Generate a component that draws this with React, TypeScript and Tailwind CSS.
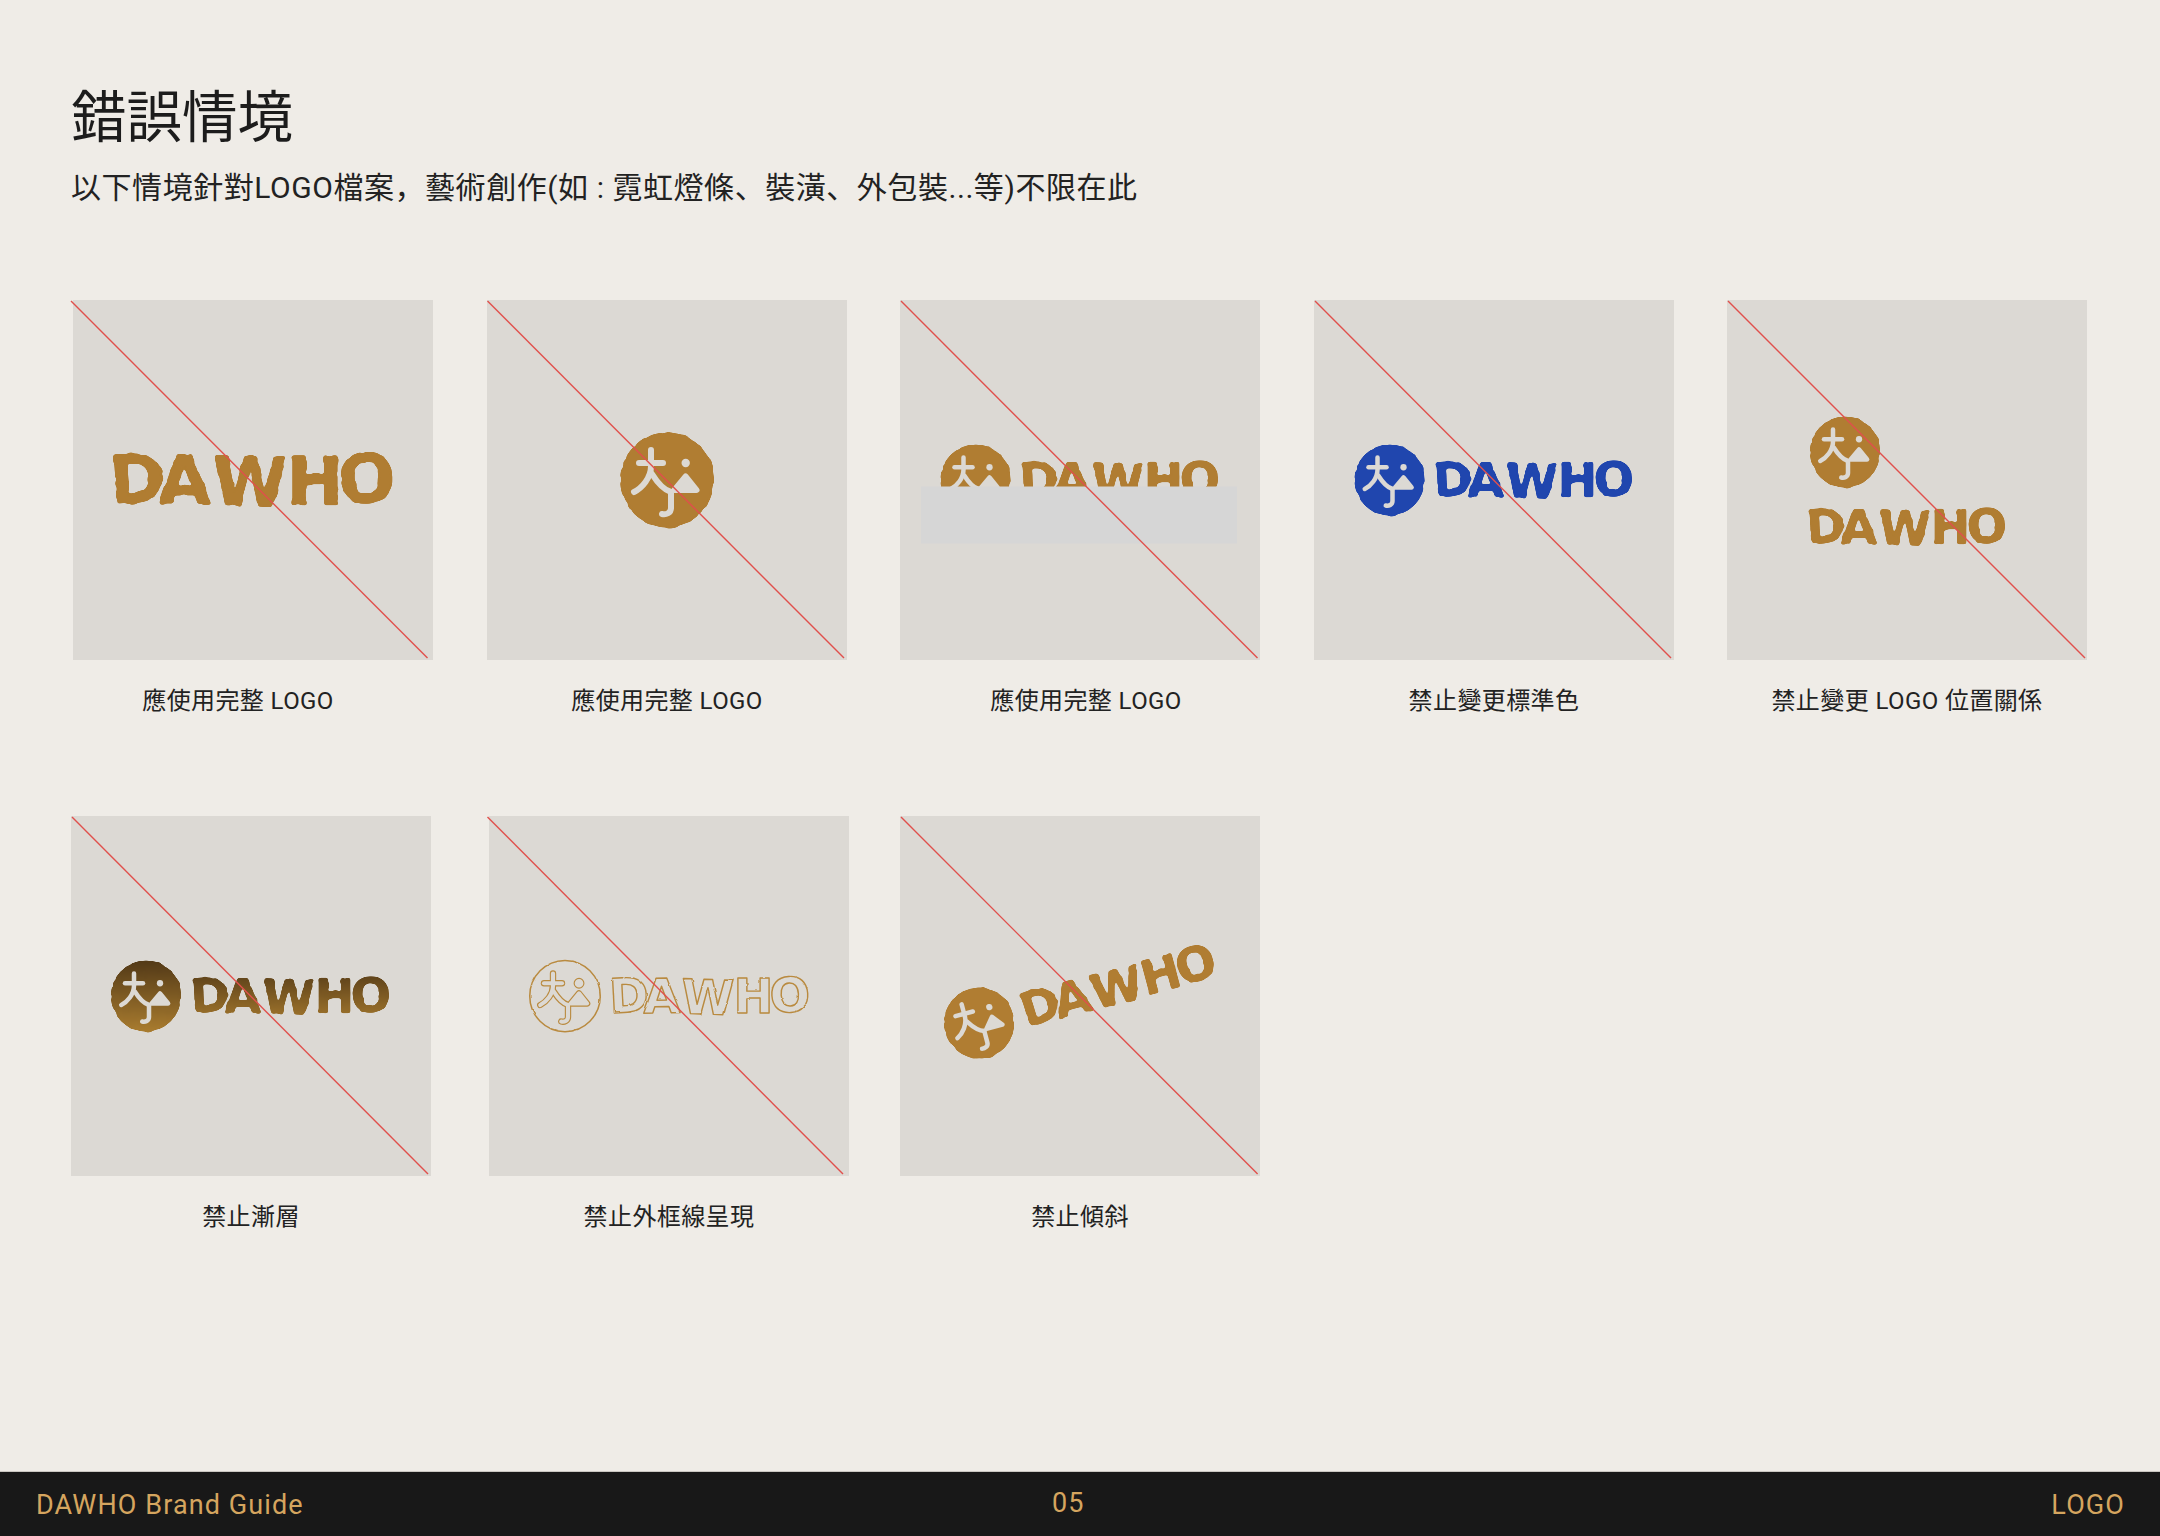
type Tone = 'gold' | 'blue' | 'fade' | 'line';

type Slot = { x: number; y: number };

type CardInfo = {
  caption: string;
  captionClass?: string;
  cardClass?: string;
  lineFrom: number;
  lineTo: number;
  tone?: Tone;
  mark?: Slot;
  markSize?: number;
  word?: Slot;
  wordWidth?: number;
  tilt?: boolean;
  cover?: boolean;
};

const FILL: Record<Tone, string> = {
  gold: '#b07d32',
  blue: '#2046ae',
  fade: 'url(#fade)',
  line: 'none',
};

const PANEL = '#dcd9d4';
const LINE_GOLD = '#b98a3f';

const ROW_ONE: CardInfo[] = [
  { caption: '應使用完整 LOGO', captionClass: 'pr-[30px]', lineFrom: -2, lineTo: 354.5, word: { x: 40.5, y: 154.5 }, wordWidth: 279 },
  { caption: '應使用完整 LOGO', cardClass: 'ml-[54px]', lineFrom: 0.5, lineTo: 357, mark: { x: 132, y: 132 }, markSize: 96 },
  { caption: '應使用完整 LOGO', captionClass: 'pl-[12px]', cardClass: 'ml-[53px]', lineFrom: 1, lineTo: 357.5, mark: { x: 39.5, y: 144 }, word: { x: 122, y: 162 }, cover: true },
  { caption: '禁止變更標準色', cardClass: 'ml-[54px]', lineFrom: 1, lineTo: 357, tone: 'blue', mark: { x: 39.5, y: 144 }, word: { x: 122, y: 162 } },
  { caption: '禁止變更 LOGO 位置關係', cardClass: 'ml-[53px]', lineFrom: 1, lineTo: 358, mark: { x: 82, y: 116 }, word: { x: 82, y: 209 } },
];

const ROW_TWO: CardInfo[] = [
  { caption: '禁止漸層', lineFrom: 1, lineTo: 357, tone: 'fade', mark: { x: 39, y: 144 }, word: { x: 122, y: 162 } },
  { caption: '禁止外框線呈現', cardClass: 'ml-[58px]', lineFrom: -1.5, lineTo: 354, tone: 'line', mark: { x: 40, y: 144 }, word: { x: 123, y: 162 } },
  { caption: '禁止傾斜', cardClass: 'ml-[51px]', lineFrom: 1, lineTo: 357.6, mark: { x: 39.5, y: 144 }, word: { x: 122, y: 162 }, tilt: true },
];

function Emblem({ at, size, tone }: { at: Slot; size: number; tone: Tone }) {
  const outline = tone === 'line';
  const strokes = (
    <>
      <path d="M20 31H44" />
      <path d="M32 18V34C32 46 23 56 15 60" />
      <path d="M33 42C38 50 45 58 52 60" />
      <path d="M52 60V76C52 81 47 83 43 82" />
      <path d="M66.7 44.5L77.5 58H55.5Z" fill={PANEL} />
    </>
  );

  return (
    <g transform={`translate(${at.x} ${at.y}) scale(${size / 96})`}>
      <g filter={outline ? 'url(#rough-thin)' : 'url(#rough)'}>
        <ellipse cx="48" cy="48" rx="47" ry="47.5" fill={FILL[tone]} stroke={outline ? LINE_GOLD : 'none'} strokeWidth={outline ? 2 : 0} />
      </g>
      {outline ? (
        <>
          <g fill="none" stroke={LINE_GOLD} strokeWidth="8.5" strokeLinecap="round" strokeLinejoin="round">
            {strokes}
            <circle cx="66.7" cy="31" r="3" />
          </g>
          <g fill="none" stroke={PANEL} strokeWidth="5.5" strokeLinecap="round" strokeLinejoin="round">
            {strokes}
            <circle cx="66.7" cy="31" r="3" fill={PANEL} />
          </g>
        </>
      ) : (
        <g fill="none" stroke={PANEL} strokeWidth="6" strokeLinecap="round" strokeLinejoin="round">
          {strokes}
          <circle cx="66.7" cy="31" r="4.2" fill={PANEL} stroke="none" />
        </g>
      )}
    </g>
  );
}

function Word({ at, width, tone }: { at: Slot; width: number; tone: Tone }) {
  const outline = tone === 'line';
  const k = width / 279;
  return (
    <g transform={`translate(${at.x} ${at.y}) scale(${k})`}>
      <g filter={outline ? 'url(#rough-thin)' : 'url(#rough)'}>
        <text
          x="-3 45 98 173 226"
          y="50"
          rotate="-3 -1 2 0 -4"
          fontSize="68"
          className="font-['DejaVu_Sans',sans-serif] font-bold"
          fill={FILL[tone]}
          stroke={outline ? LINE_GOLD : FILL[tone]}
          strokeWidth={outline ? 2 : 0.6}
          strokeLinejoin="round"
        >
          DAWHO
        </text>
      </g>
    </g>
  );
}

function Card({ info }: { info: CardInfo }) {
  const tone = info.tone ?? 'gold';
  return (
    <div className={`w-[360px] shrink-0 ${info.cardClass ?? ''}`}>
      <div className="h-[360px] w-[360px] bg-[#dcd9d4]">
        <svg viewBox="0 0 360 360" className="h-[360px] w-[360px] overflow-visible">
          <g transform={info.tilt ? 'rotate(-15 180 180)' : undefined}>
            {info.mark && <Emblem at={info.mark} size={info.markSize ?? 72} tone={tone} />}
            {info.word && <Word at={info.word} width={info.wordWidth ?? 196} tone={tone} />}
          </g>
          {info.cover && <rect x="21" y="186.5" width="316" height="57" fill="#d6d6d6" />}
          <line x1={info.lineFrom} y1="1" x2={info.lineTo} y2="358" stroke="#e0504c" strokeWidth="1.4" />
        </svg>
      </div>
      <p className={`mt-[25px] text-center text-[24px] leading-8 tracking-[0.4px] text-[#222222] ${info.captionClass ?? ''}`}>{info.caption}</p>
    </div>
  );
}

export default function App() {
  return (
    <div className="flex h-[1536px] w-[2160px] flex-col overflow-hidden bg-[#efece7] font-['Roboto','Noto_Sans_CJK_JP',sans-serif]">
      <svg className="absolute h-0 w-0">
        <defs>
          <filter id="rough" x="-10%" y="-15%" width="120%" height="130%" colorInterpolationFilters="sRGB">
            <feTurbulence type="fractalNoise" baseFrequency="0.09" numOctaves="2" seed="4" result="noise" />
            <feDisplacementMap in="SourceGraphic" in2="noise" scale="4" xChannelSelector="R" yChannelSelector="G" result="moved" />
            <feGaussianBlur in="moved" stdDeviation="1.3" result="soft" />
            <feComponentTransfer in="soft">
              <feFuncA type="linear" slope="5" intercept="-2" />
            </feComponentTransfer>
          </filter>
          <filter id="rough-thin" x="-10%" y="-15%" width="120%" height="130%" colorInterpolationFilters="sRGB">
            <feTurbulence type="fractalNoise" baseFrequency="0.09" numOctaves="2" seed="4" result="noise" />
            <feDisplacementMap in="SourceGraphic" in2="noise" scale="3" xChannelSelector="R" yChannelSelector="G" />
          </filter>
          <linearGradient id="fade" x1="0" y1="0" x2="0" y2="1">
            <stop offset="0" stopColor="#523917" />
            <stop offset="1" stopColor="#a97c2f" />
          </linearGradient>
        </defs>
      </svg>

      <main className="flex-1">
        <h1 className="ml-[71px] mt-[84px] text-[55.5px] leading-[70px] text-[#1c1c1c]">錯誤情境</h1>
        <p className="ml-[71px] mt-[14px] text-[30px] leading-10 tracking-[0.55px] text-[#222222]">以下情境針對LOGO檔案，藝術創作(如 : 霓虹燈條、裝潢、外包裝...等)不限在此</p>

        <section className="ml-[73px] mt-[92px] flex">
          {ROW_ONE.map((info, i) => (
            <Card key={i} info={info} />
          ))}
        </section>
        <section className="ml-[71px] mt-[99px] flex">
          {ROW_TWO.map((info, i) => (
            <Card key={i} info={info} />
          ))}
        </section>
      </main>

      <footer className="flex h-[65px] items-center border-t border-[#c9c6c0] bg-[#181818] pl-[36px] pr-[35px] pt-[2px] text-[27px] tracking-[1.1px] text-[#d5a55f]">
        <span className="w-[1016px]">DAWHO Brand Guide</span>
        <span className="-translate-y-[2px]">05</span>
        <span className="ml-auto">LOGO</span>
      </footer>
    </div>
  );
}
